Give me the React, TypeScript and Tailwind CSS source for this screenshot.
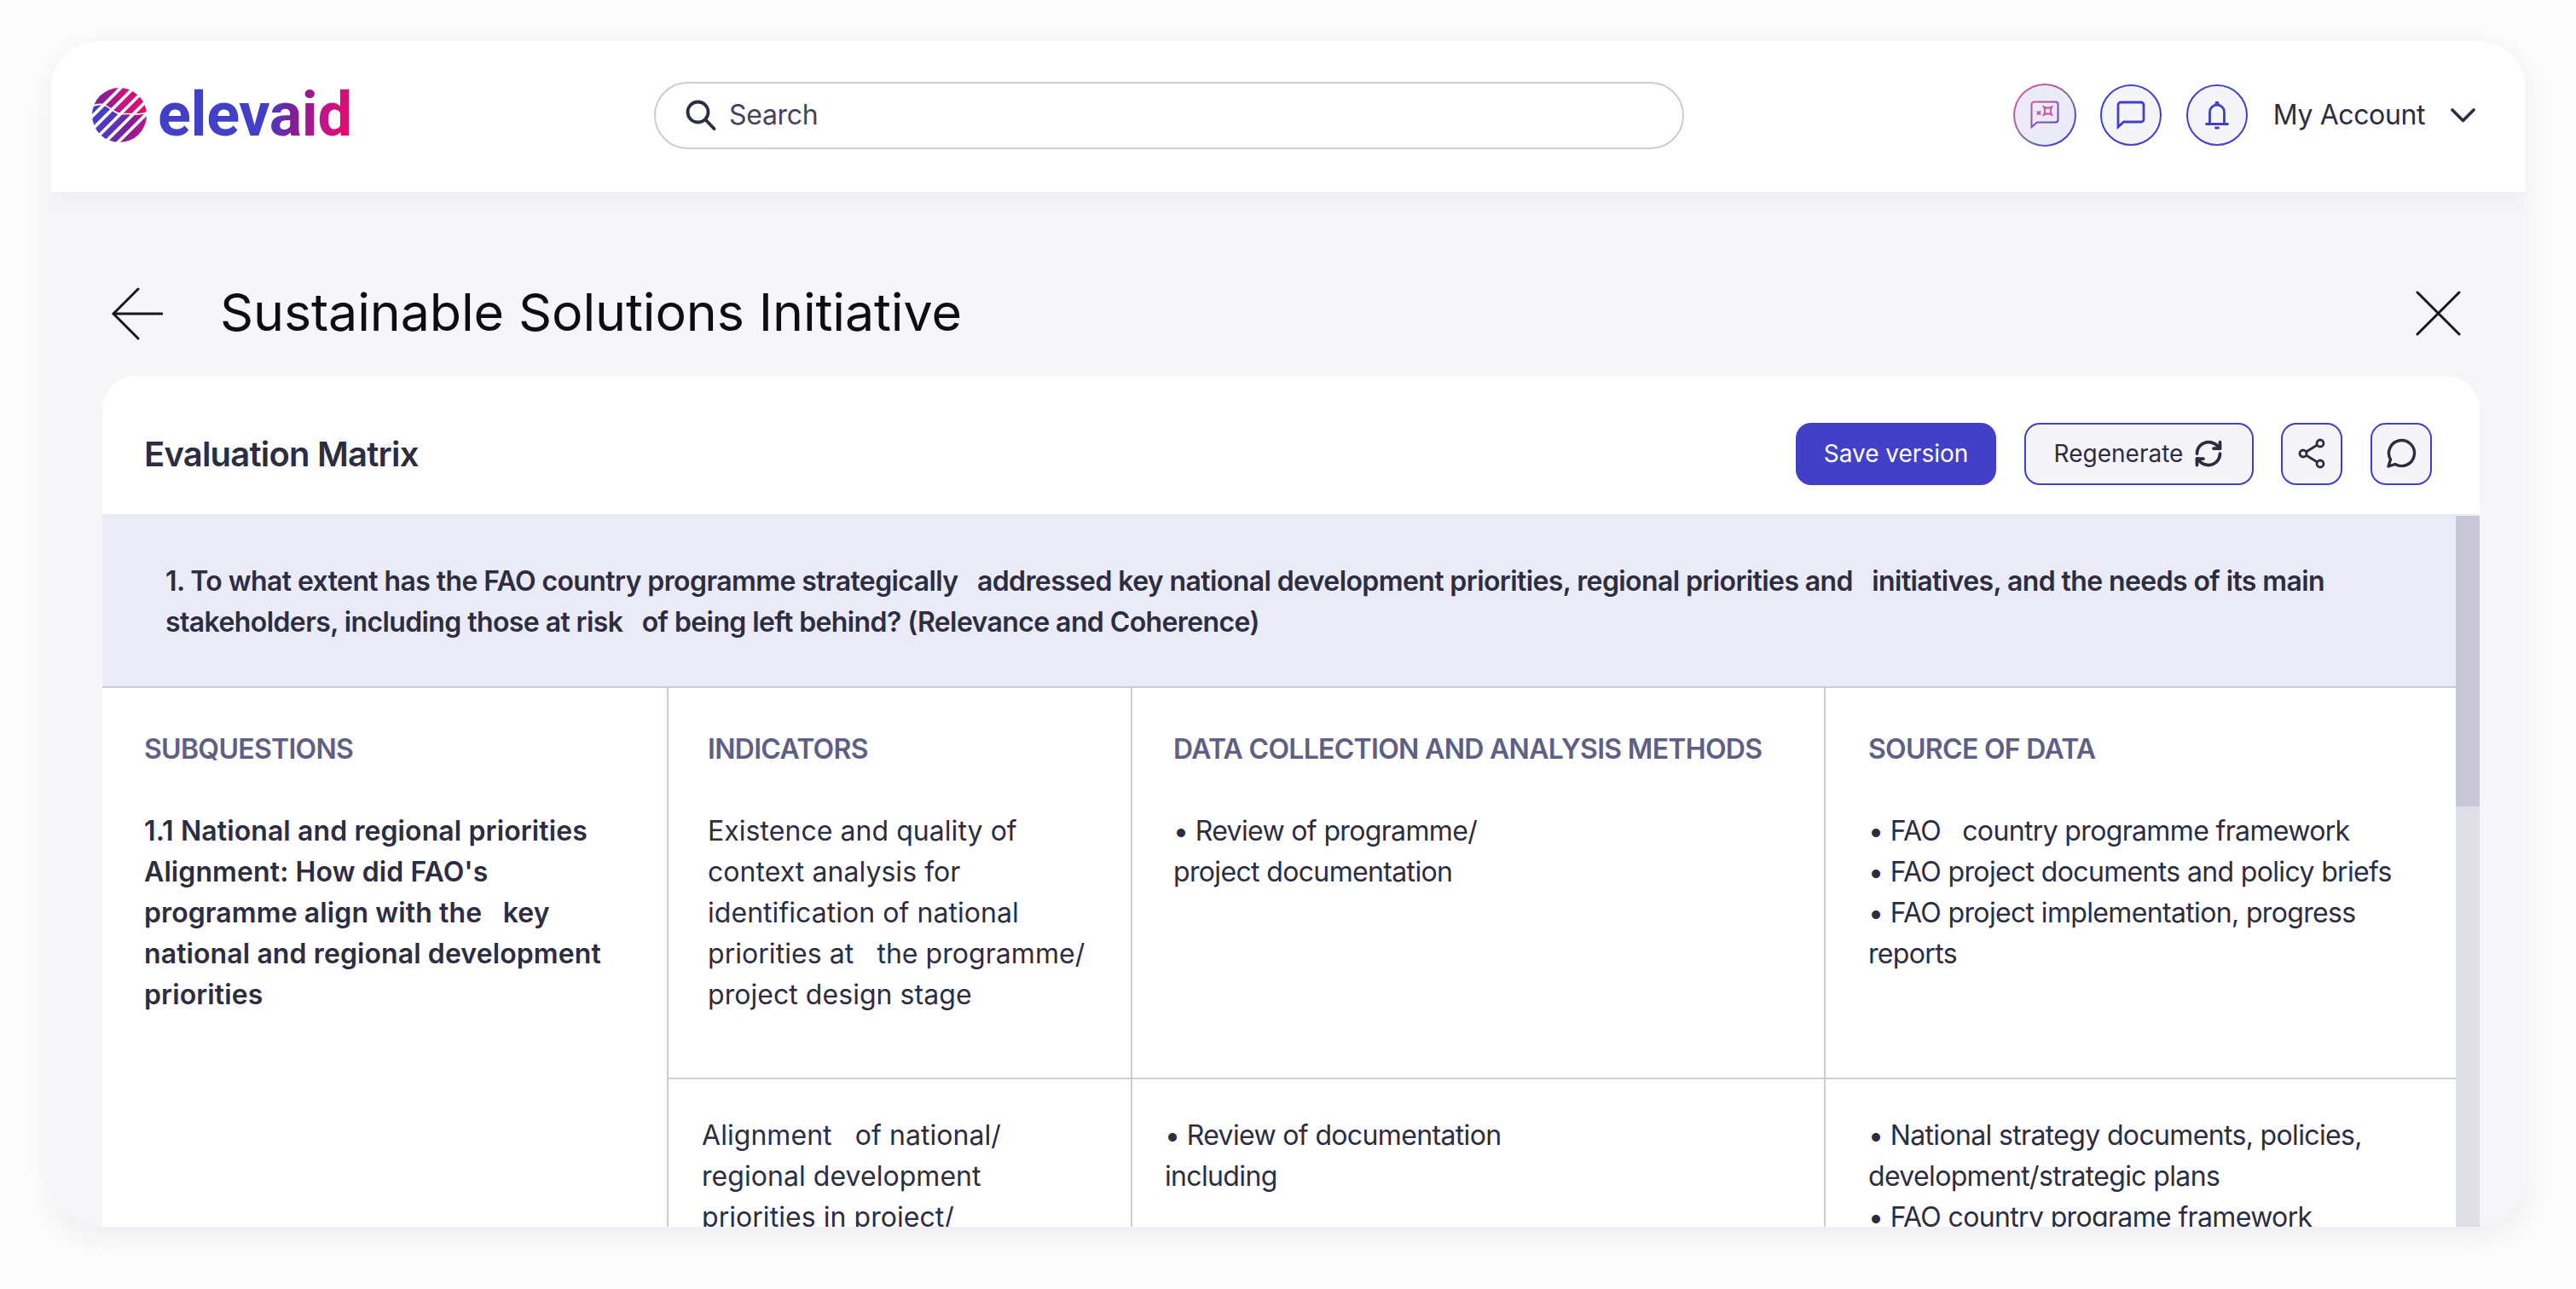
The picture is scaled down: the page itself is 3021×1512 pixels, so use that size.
import { RefreshCw } from "lucide-react";

const font = { fontFeatureSettings: '"kern"' };

const Logo = () => (
  <div className="flex items-center gap-[13px] w-[659px]">
    <svg width="64" height="64" viewBox="55 43 194 194">
      <defs>
        <linearGradient id="lt" x1="60" y1="0" x2="250" y2="0" gradientUnits="userSpaceOnUse">
          <stop offset="0.1" stopColor="#7d2096" />
          <stop offset="0.5" stopColor="#c2148a" />
          <stop offset="0.95" stopColor="#e80a68" />
        </linearGradient>
        <linearGradient id="lb" x1="60" y1="110" x2="250" y2="190" gradientUnits="userSpaceOnUse">
          <stop offset="0.1" stopColor="#4240c8" />
          <stop offset="0.45" stopColor="#5a34b8" />
          <stop offset="0.7" stopColor="#861c92" />
          <stop offset="1" stopColor="#c0148c" />
        </linearGradient>
        <mask id="lm">
          <ellipse cx="152" cy="140" rx="97" ry="97" fill="#fff" />
          <g stroke="#000" strokeWidth="11" fill="none">
            <path d="M250 -50L-50 250" />
            <path d="M296 -50L-50 296" />
            <path d="M342 -50L-50 342" />
            <path d="M388 -50L-50 388" />
            <path d="M434 -50L-50 434" />
            <path d="M254 128C225 145 195 132 165 136C135 140 120 108 92 102C75 100 62 104 50 112" strokeWidth="5" />
          </g>
        </mask>
      </defs>
      <g mask="url(#lm)">
        <rect x="50" y="40" width="204" height="200" fill="url(#lb)" />
        <path d="M50 40H254V128C225 145 195 132 165 136C135 140 120 108 92 102C75 100 62 104 50 112Z" fill="url(#lt)" />
      </g>
    </svg>
    <span className="font-['Roboto',sans-serif] font-bold text-[72px] leading-none tracking-[-0.4px] bg-[linear-gradient(100deg,#4240c8_0%,#4240c8_56%,#861c92_70%,#c2148a_84%,#e20a6c_96%)] bg-clip-text text-transparent">
      elevaid
    </span>
  </div>
);

const CircleButton = ({ children }: { children: React.ReactNode }) => (
  <button className="w-[72px] h-[72px] rounded-full border-2 border-[#4240c8] bg-[#f5f5f9] flex items-center justify-center">
    {children}
  </button>
);

const Cell = ({ className = "", children }: { className?: string; children: React.ReactNode }) => (
  <div className={`text-[32px] leading-[48px] text-[#2d2d42] ${className}`}>{children}</div>
);

const Heading = ({ children }: { children: React.ReactNode }) => (
  <h3 className="text-[32px] leading-[48px] font-semibold tracking-[-0.7px] text-[#5f5f85] mb-[48px]">{children}</h3>
);

export default function App() {
  return (
    <div
      className="w-[3021px] h-[1512px] bg-[#fcfcfd] pt-[48px] pl-[60px] font-['Inter',sans-serif] overflow-hidden"
      style={font}
    >
      <div className="w-[2902px] h-[1391px] rounded-[56px] bg-[#f6f6f9] overflow-hidden shadow-[0_10px_36px_rgba(40,40,60,0.07)] flex flex-col">
        <header className="h-[177px] shrink-0 bg-white flex items-center pl-[48px] pr-[59px] pb-[3px] shadow-[0_10px_30px_rgba(40,40,80,0.035)]">
          <Logo />
          <div className="w-[1208px] h-[79px] rounded-full border-2 border-[#cccbdc] flex items-center pl-[35px] gap-[15px]">
            <svg width="36" height="36" viewBox="0 0 36 36" fill="none" stroke="#2d2d42" strokeWidth="3.8" strokeLinecap="round">
              <circle cx="14.500" cy="14.500" r="12" />
              <path d="M23.500 23.500L33.500 34" />
            </svg>
            <span className="text-[32px] tracking-[-0.3px] text-[#44445c]">Search</span>
          </div>
          <div className="ml-auto flex items-center">
            <div className="w-[74px] h-[74px] rounded-full p-[2px] bg-[linear-gradient(135deg,#d0609f_0%,#b05fa8_35%,#7a7a90_55%,#4240c8_85%)]">
              <div className="w-full h-full rounded-full bg-[#ebebf7] flex items-center justify-center">
                <svg width="34" height="34" viewBox="0 0 34 34" fill="none">
                  <defs>
                    <linearGradient id="ai" x1="0" y1="0" x2="1" y2="1">
                      <stop offset="0" stopColor="#c85aa0" />
                      <stop offset="1" stopColor="#4a48c0" />
                    </linearGradient>
                  </defs>
                  <path d="M1.500 31V4.500a3 3 0 0 1 3-3h25a3 3 0 0 1 3 3v18a3 3 0 0 1-3 3H8z" stroke="url(#ai)" strokeWidth="2" />
                  <path d="M16 7.500c3 1.500 6 1.500 9 0-1.500 3-1.500 6 0 9-3-1.500-6-1.500-9 0 1.500-3 1.500-6 0-9z" stroke="#c85aa0" strokeWidth="2" />
                  <path d="M8 12.500l4 4M12 12.500l-4 4" stroke="#c85aa0" strokeWidth="2" />
                </svg>
              </div>
            </div>
            <div className="ml-[28px]">
              <CircleButton>
                <svg width="34" height="34" viewBox="0 0 34 34" fill="none" stroke="#4240c8" strokeWidth="2.800">
                  <path d="M2 31V5a3 3 0 0 1 3-3h24a3 3 0 0 1 3 3v17a3 3 0 0 1-3 3H8.500z" />
                </svg>
              </CircleButton>
            </div>
            <div className="ml-[29px]">
              <CircleButton>
                <svg width="28" height="33" viewBox="0 0 28 33" fill="none" stroke="#4240c8" strokeWidth="2.800" strokeLinecap="round">
                  <path d="M5.500 26V12.500a8.500 8.500 0 0 1 17 0V26" />
                  <path d="M1.500 26.500h25" />
                  <circle cx="14" cy="2" r="1" fill="#4240c8" />
                  <path d="M12.500 31h3" />
                </svg>
              </CircleButton>
            </div>
            <span className="ml-[30px] text-[32px] tracking-[-0.4px] text-[#2d2d42]">My Account</span>
            <svg className="ml-[30px]" width="29" height="17" viewBox="0 0 29 17" fill="none" stroke="#2d2d42" strokeWidth="3.600" strokeLinecap="round" strokeLinejoin="round">
              <path d="M2 2l12.500 12.500L27 2" />
            </svg>
          </div>
        </header>

        <div className="h-[216px] shrink-0 flex items-center pl-[71px] pr-[76px] pt-[66px]">
          <svg className="mt-[3px]" width="60" height="62" viewBox="0 0 60 62" fill="none" stroke="#16161f" strokeWidth="3" strokeLinecap="round" strokeLinejoin="round">
            <path d="M31 2L2 31l29 29" />
            <path d="M2 31h57" />
          </svg>
          <h1 className="ml-[67px] text-[61px] leading-none tracking-[-0.15px] text-[#0d0d14]">
            Sustainable Solutions Initiative
          </h1>
          <svg className="ml-auto mt-[2px]" width="53" height="53" viewBox="0 0 53 53" fill="none" stroke="#16161f" strokeWidth="3" strokeLinecap="round">
            <path d="M2 2l49 49M51 2L2 51" />
          </svg>
        </div>

        <main className="ml-[60px] w-[2788px] flex-1 min-h-0 rounded-t-[40px] bg-white flex flex-col">
          <div className="h-[164px] shrink-0 flex items-center pl-[49px] pr-[56px] pt-[20px] border-b-2 border-[#ebebf7]">
            <h2 className="text-[40px] font-semibold tracking-[-0.8px] text-[#2d2d42] mt-[2px]">Evaluation Matrix</h2>
            <div className="ml-auto flex items-center">
              <button className="w-[235px] h-[73px] rounded-[18px] bg-[#4240c8] text-white text-[28px]">Save version</button>
              <button className="ml-[33px] w-[269px] h-[73px] rounded-[18px] border-2 border-[#4240c8] bg-[#f5f5f9] text-[#2d2d42] text-[28px] flex items-center justify-center gap-[12px]">
                Regenerate
                <RefreshCw className="w-[36px] h-[36px]" strokeWidth={2.500} />
              </button>
              <button className="ml-[32px] w-[72px] h-[73px] rounded-[18px] border-2 border-[#4240c8] bg-[#f5f5f9] flex items-center justify-center">
                <svg width="32" height="36" viewBox="0 0 32 36" fill="none" stroke="#2d2d42" strokeWidth="2.800">
                  <circle cx="6" cy="18" r="4" />
                  <circle cx="26" cy="6" r="4" />
                  <circle cx="26" cy="30" r="4" />
                  <path d="M9.500 16l13-8M9.500 20l13 8" />
                </svg>
              </button>
              <button className="ml-[33px] w-[72px] h-[73px] rounded-[18px] border-2 border-[#4240c8] bg-[#f5f5f9] flex items-center justify-center">
                <svg width="36" height="36" viewBox="0 0 36 36" fill="none" stroke="#2d2d42" strokeWidth="3.400" strokeLinejoin="round">
                  <path d="M3 33l2.500-8A15 15 0 1 1 11 30.500z" />
                </svg>
              </button>
            </div>
          </div>

          <div className="flex flex-1 min-h-0">
            <div className="w-[2760px] shrink-0 flex flex-col">
              <div className="h-[202px] shrink-0 bg-[#ebebf7] border-b-2 border-[#cccbdc] pl-[74px] pt-[53px] text-[32px] leading-[48px] font-semibold tracking-[-0.6px] text-[#2d2d42]">
                1. To what extent has the FAO country programme strategically&nbsp;&nbsp; addressed key national development priorities, regional priorities and&nbsp;&nbsp; initiatives, and the needs of its main
                <br />
                stakeholders, including those at risk&nbsp;&nbsp; of being left behind? (Relevance and Coherence)
              </div>

              <div className="grid grid-cols-[664px_544px_813px_739px] grid-rows-[459px_1fr] flex-1 min-h-0 tracking-[-0.65px]">
                <div className="row-span-2 pl-[49px] pt-[48px] border-r-2 border-[#cccbdc]">
                  <Heading>SUBQUESTIONS</Heading>
                  <Cell className="font-semibold tracking-[0.1px]">
                    1.1 National and regional priorities
                    <br />
                    Alignment: How did FAO's
                    <br />
                    programme align with the&nbsp;&nbsp; key
                    <br />
                    national and regional development
                    <br />
                    priorities
                  </Cell>
                </div>

                <div className="pl-[46px] pt-[48px] border-r-2 border-b-2 border-[#cccbdc]">
                  <Heading>INDICATORS</Heading>
                  <Cell className="tracking-[0.05px]">
                    Existence and quality of
                    <br />
                    context analysis for
                    <br />
                    identification of national
                    <br />
                    priorities at&nbsp;&nbsp; the programme/
                    <br />
                    project design stage
                  </Cell>
                </div>
                <div className="pl-[48px] pt-[48px] border-r-2 border-b-2 border-[#cccbdc]">
                  <Heading>DATA COLLECTION AND ANALYSIS METHODS</Heading>
                  <Cell>
                    • Review of programme/
                    <br />
                    project documentation
                  </Cell>
                </div>
                <div className="pl-[50px] pt-[48px] border-b-2 border-[#cccbdc]">
                  <Heading>SOURCE OF DATA</Heading>
                  <Cell>
                    • FAO&nbsp;&nbsp; country programme framework
                    <br />
                    • FAO project documents and policy briefs
                    <br />
                    • FAO project implementation, progress
                    <br />
                    reports
                  </Cell>
                </div>

                <div className="pl-[39px] pt-[42px] border-r-2 border-[#cccbdc] overflow-hidden">
                  <Cell className="tracking-[0.05px]">
                    Alignment&nbsp;&nbsp; of national/
                    <br />
                    regional development
                    <br />
                    priorities in project/
                  </Cell>
                </div>
                <div className="pl-[38px] pt-[42px] border-r-2 border-[#cccbdc] overflow-hidden">
                  <Cell>
                    • Review of documentation
                    <br />
                    including
                  </Cell>
                </div>
                <div className="pl-[50px] pt-[42px] overflow-hidden">
                  <Cell>
                    • National strategy documents, policies,
                    <br />
                    development/strategic plans
                    <br />
                    • FAO country programe framework
                  </Cell>
                </div>
              </div>
            </div>

            <div className="w-[28px] shrink-0 bg-[#dedee9]">
              <div className="h-[341px] bg-[#c9c8da]" />
            </div>
          </div>
        </main>
      </div>
    </div>
  );
}
